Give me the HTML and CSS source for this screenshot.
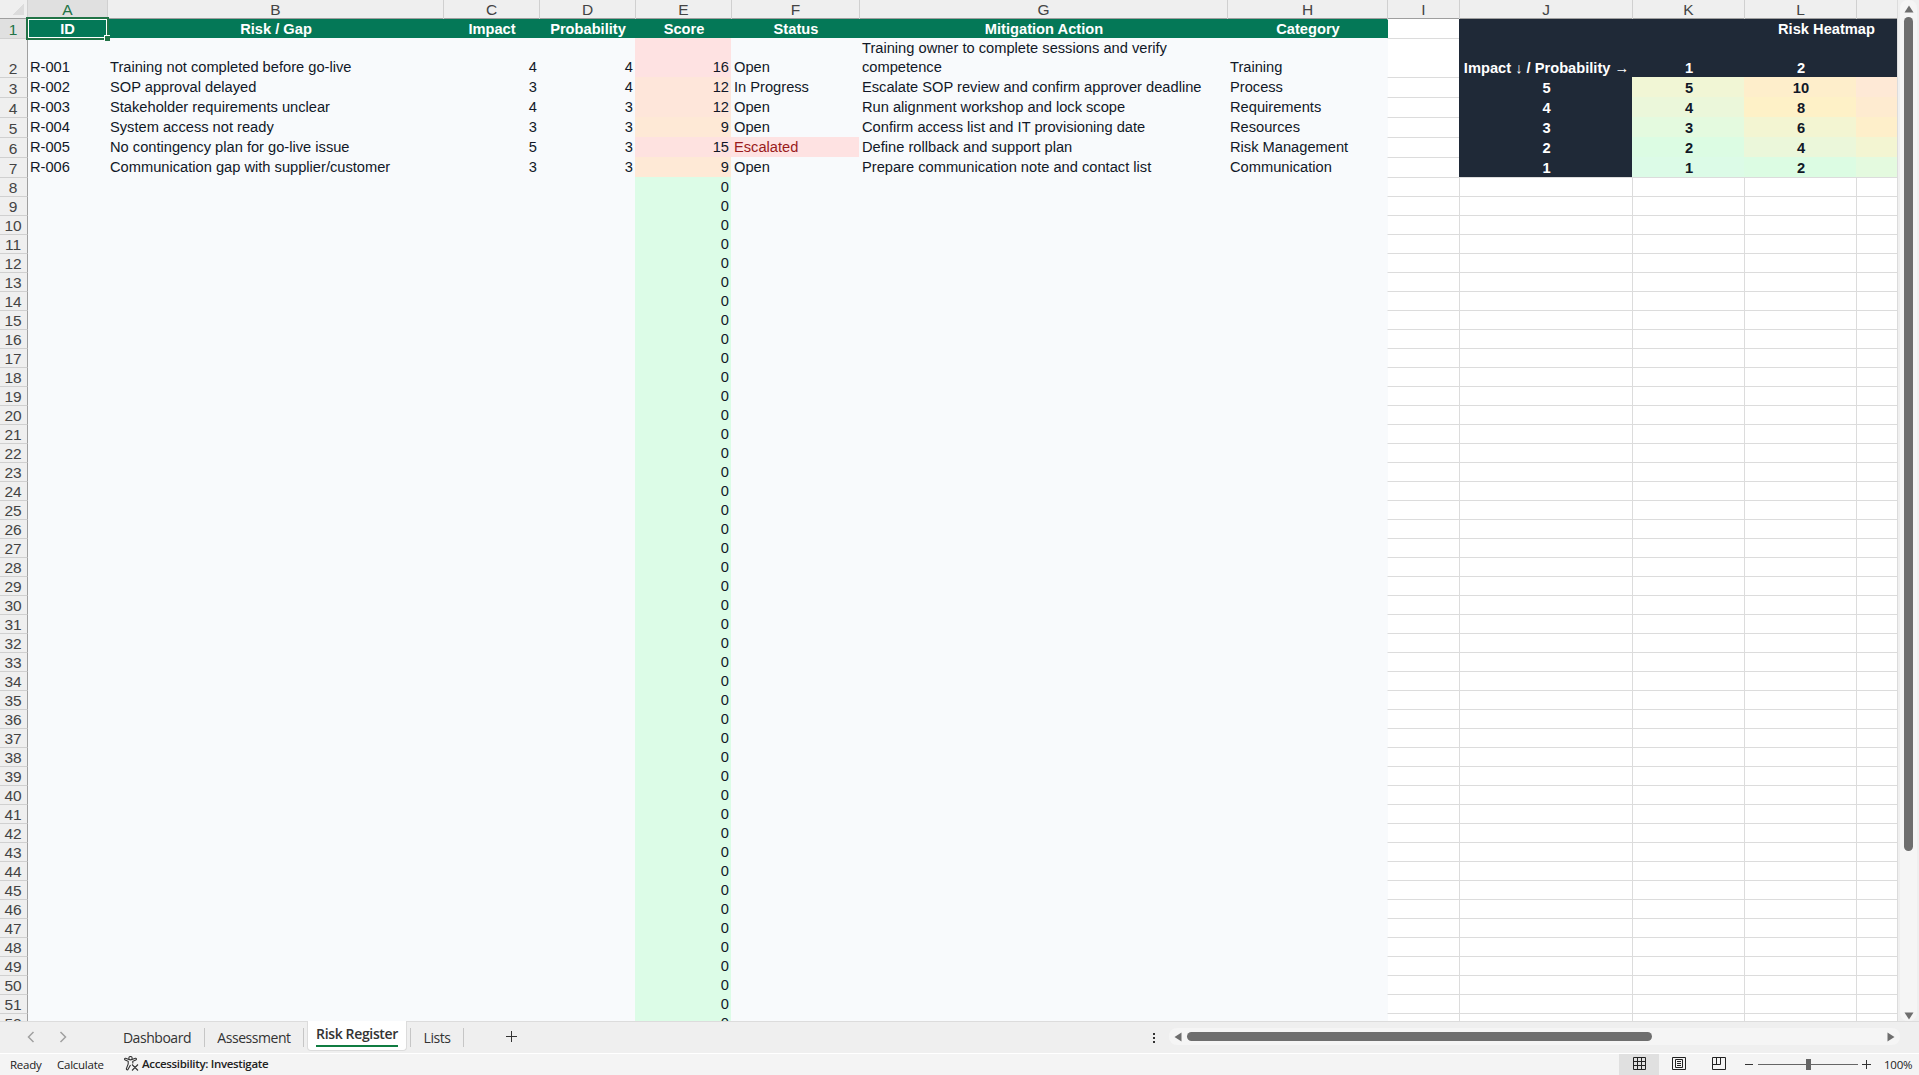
FILE: index.html
```html
<!DOCTYPE html>
<html lang="en">
<head>
    <meta charset="UTF-8">
    <meta name="viewport" content="width=device-width, initial-scale=1.0">
    <title>Risk Register</title>
    <link rel="stylesheet" href="styles.css">
</head>
<body>
    <div class="app">
        <div class="main">
            <div class="sheet" id="sheet"></div>
            <div class="vscroll">
                <svg width="10" height="8" viewBox="0 0 10 8"><path d="M5 .5 9.5 7.5H.5z" fill="#6e6e6e"/></svg>
                <div class="vthumb"></div>
                <svg class="down" width="10" height="8" viewBox="0 0 10 8"><path d="M5 7.5 9.5.5H.5z" fill="#6e6e6e"/></svg>
            </div>
        </div>

        <div class="tabbar">
            <div class="nav">
                <svg width="8" height="12" viewBox="0 0 8 12"><path d="M6.5 1 1.5 6l5 5" fill="none" stroke="#a0a0a0" stroke-width="1.5"/></svg>
                <svg width="8" height="12" viewBox="0 0 8 12"><path d="M1.5 1l5 5-5 5" fill="none" stroke="#a0a0a0" stroke-width="1.5"/></svg>
            </div>
            <div class="tab dashboard"><span>Dashboard</span></div>
            <div class="tab assessment"><span>Assessment</span></div>
            <div class="tab active"><span>Risk Register</span></div>
            <div class="tab lists"><span>Lists</span></div>
            <svg class="plus" width="11" height="11" viewBox="0 0 11 11"><path d="M5.500 0v11M0 5.500h11" stroke="#333"/></svg>
            <svg class="dots" width="2" height="11" viewBox="0 0 2 11"><path d="M0 0h2v2H0zM0 4h2v2H0zM0 8h2v2H0z" fill="#333"/></svg>
            <div class="hscroll">
                <svg width="8" height="10" viewBox="0 0 8 10"><path d="M.5 5 7.5.5v9z" fill="#6e6e6e"/></svg>
                <div class="hthumb"></div>
                <svg class="right" width="8" height="10" viewBox="0 0 8 10"><path d="M7.5 5 .5.5v9z" fill="#6e6e6e"/></svg>
            </div>
        </div>

        <div class="statusbar">
            <span class="ready">Ready</span>
            <span class="calc">Calculate</span>
            <svg class="access" width="15" height="15" viewBox="0 0 15 15" fill="none" stroke="#333" stroke-width="1.1">
                <circle cx="6.5" cy="2.2" r="1.7"/>
                <path d="M5 3.6 1.6 2.3C.5 2 .2 3.600 1.200 4L4.200 5.300V8L2.400 12.600c-.3 1.200 1.200 1.700 1.700.7L6.500 9M8 3.600l3.400-1.300c1.100-.3 1.400 1.300.4 1.700L8.800 5.300V7.500M8 8.500l6 6M14 8.500l-6 6"/>
            </svg>
            <b class="accesstext">Accessibility: Investigate</b>
            <div class="views">
                <div class="view on">
                    <svg width="13" height="13" viewBox="0 0 13 13" fill="none" stroke="#222"><path d="M.5.500h12v12H.5zM.5 4.500h12M.5 8.500h12M4.500.5v12M8.500.5v12"/></svg>
                </div>
                <div class="view">
                    <svg width="14" height="13" viewBox="0 0 14 13" fill="none" stroke="#222"><path d="M.5.500h13v12H.5zM3.500 2.500h7v8h-7zM5 4.500h4M5 6.500h4M5 8.500h4"/></svg>
                </div>
                <div class="view">
                    <svg width="14" height="13" viewBox="0 0 14 13" fill="none" stroke="#222"><path d="M.5.500h13v12H.5zM.5 7.500h8v-7M4.500.5v7"/></svg>
                </div>
            </div>
            <svg class="minus" width="8" height="9" viewBox="0 0 8 9"><path d="M0 4.500h8" stroke="#333"/></svg>
            <div class="slider"><div class="knob"></div></div>
            <svg class="zoomin" width="9" height="9" viewBox="0 0 9 9"><path d="M0 4.500h9M4.500 0v9" stroke="#333"/></svg>
            <span class="percent">100%</span>
        </div>
    </div>

    <script>
        const columns = 'ABCDEFGHIJKLM'.split('');

        const headers = ['ID', 'Risk / Gap', 'Impact', 'Probability', 'Score', 'Status', 'Mitigation Action', 'Category'];

        const risks = [
            ['R-001', 'Training not completed before go-live', 4, 4, 16, 'Open', 'Training owner to complete sessions and verify competence', 'Training'],
            ['R-002', 'SOP approval delayed', 3, 4, 12, 'In Progress', 'Escalate SOP review and confirm approver deadline', 'Process'],
            ['R-003', 'Stakeholder requirements unclear', 4, 3, 12, 'Open', 'Run alignment workshop and lock scope', 'Requirements'],
            ['R-004', 'System access not ready', 3, 3, 9, 'Open', 'Confirm access list and IT provisioning date', 'Resources'],
            ['R-005', 'No contingency plan for go-live issue', 5, 3, 15, 'Escalated', 'Define rollback and support plan', 'Risk Management'],
            ['R-006', 'Communication gap with supplier/customer', 3, 3, 9, 'Open', 'Prepare communication note and contact list', 'Communication']
        ];

        // Heatmap rows, columns J to M
        const heatmap = [
            ['Impact ↓ / Probability →', 1, 2, ''],
            [5, 5, 10, ''],
            [4, 4, 8, ''],
            [3, 3, 6, ''],
            [2, 2, 4, ''],
            [1, 1, 2, '']
        ];

        function cell(text, cls) {
            return `<div class="cell ${cls}">${text === '' ? '' : `<span>${text}</span>`}</div>`;
        }

        let html = '<div class="row colhead"><div class="corner"></div>';
        columns.forEach((c, i) => {
            html += `<div class="col${i === 0 ? ' sel' : ''}">${c === 'M' ? '' : c}</div>`;
        });
        html += '</div>';

        for (let r = 1; r <= 52; r++) {
            const size = r === 1 ? 'first' : r === 2 ? 'tall' : r <= 7 ? 'mid' : 'low';
            html += `<div class="row ${size}"><div class="rownum${r === 1 ? ' sel' : ''}">${r}</div>`;
            for (let c = 0; c < 8; c++) {
                if (r === 1) {
                    html += cell(headers[c], 'head' + (c === 0 ? ' picked' : ''));
                    continue;
                }
                const risk = risks[r - 2];
                let value = risk ? risk[c] : (c === 4 ? 0 : '');
                let cls = 'body';
                if (c === 0) cls += ' id';
                if (c >= 2 && c <= 4) cls += ' num';
                if (c === 4) cls += ' score s' + value;
                if (value === 'Escalated') cls += ' escalated';
                html += cell(value, cls);
            }
            html += cell('', 'plain');
            if (r === 1) {
                html += '<div class="cell dark title"><span>Risk Heatmap</span></div>';
            } else if (r <= 7) {
                heatmap[r - 2].forEach((v, i) => {
                    // column M holds impact x 3, only its colour is in view
                    const score = i === 3 ? (8 - r) * 3 : v;
                    const cls = (r === 2 || i === 0) ? 'dark' : 'h' + score;
                    html += cell(v, 'map ' + cls);
                });
            } else {
                html += cell('', 'plain') + cell('', 'plain') + cell('', 'plain') + cell('', 'plain');
            }
            html += '</div>';
        }
        document.getElementById('sheet').innerHTML = html;
    </script>
</body>
</html>
```
FILE: styles.css
```css
body {
    margin: 0;
    background: #efefef;
    font-family: "Liberation Sans", Arial, sans-serif;
    overflow: hidden;
}
.app {
    display: flex;
    flex-direction: column;
    width: 1919px;
    height: 1075px;
}
.main {
    display: flex;
    height: 1021px;
}
.sheet {
    width: 1897px;
    height: 1021px;
    overflow: hidden;
    border-right: 1px solid #dcdcdc;
}
.row {
    display: grid;
    grid-template-columns: 28px 79px 336px 96px 96px 96px 128px 368px 160px 72px 173px 112px 112px 41px;
    height: 19px;
}
.row.tall {
    height: 39px;
}
.row.mid {
    height: 20px;
}
.colhead {
    height: 18px;
    border-bottom: 1px solid #9f9f9f;
    background: #efefef;
}
.col {
    display: flex;
    justify-content: center;
    font-size: 15.5px;
    line-height: 19px;
    color: #444;
    border-left: 1px solid #d0d0d0;
}
.col.sel {
    background: #e0e0e0;
    color: #217346;
    border-left: none;
}
.corner {
    background: linear-gradient(135deg, transparent 50%, #dcdcdc 50%) no-repeat 13px 4px / 11px 11px;
    border-right: 1px solid #d0d0d0;
}
.rownum {
    display: flex;
    align-items: flex-end;
    justify-content: center;
    padding-right: 1px;
    border-right: 1px solid #9f9f9f;
    border-top: 1px solid #d0d0d0;
    background: #efefef;
    color: #444;
    font-size: 15.5px;
    line-height: 16px;
    overflow: hidden;
}
.rownum.sel {
    background: #e0e0e0;
    color: #217346;
    border-top: none;
}
.cell {
    display: flex;
    align-items: flex-end;
    min-width: 0;
    padding: 0 3px;
    font-size: 14.67px;
    line-height: 19px;
    color: #111827;
}
.low .cell {
    line-height: 17px;
}
.head {
    justify-content: center;
    padding-left: 5px;
    background: #047857;
    color: #fff;
    font-weight: bold;
    line-height: 17px;
}
.picked {
    position: relative;
    padding-left: 3px;
    outline: 2px solid #217346;
    box-shadow: inset 0 0 0 1px #fff;
}
.picked::after {
    content: "";
    position: absolute;
    right: -3px;
    bottom: -3px;
    width: 5px;
    height: 5px;
    background: #217346;
    border: 1px solid #fff;
    border-right: none;
    border-bottom: none;
}
.body {
    background: #f8fafc;
}
.id {
    padding-left: 2px;
}
.num {
    justify-content: flex-end;
    padding-right: 2px;
}
.s0 { background: #dcfce7; }
.s9 { background: #fee9d6; }
.s12 { background: #fee6da; }
.s15 { background: #fee2e0; }
.s16 { background: #fee2e2; }
.escalated {
    background: #fee2e2;
    color: #991b1b;
}
.plain {
    background: #fff;
    border-top: 1px solid #dcdcdc;
    border-left: 1px solid #dcdcdc;
}
.row .body + .plain {
    border-left-color: #f8fafc;
}
.first .plain {
    border-top-color: #fff;
    border-left-color: #047857;
}
.dark {
    background: #1f2937;
    color: #fff;
    font-weight: bold;
    justify-content: center;
    line-height: 17px;
}
.title {
    grid-column: 11 / 15;
    padding-left: 300px;
}
.map {
    justify-content: center;
    padding-left: 5px;
    font-weight: bold;
    line-height: 18px;
    white-space: nowrap;
}
.h1 { background: #dcfbe7; }
.h2 { background: #dcfce3; }
.h3 { background: #e4fadf; }
.h4 { background: #ebf7da; }
.h5 { background: #f1f6d5; }
.h6 { background: #f3f5d2; }
.h8 { background: #fef1c7; }
.h9 { background: #feefca; }
.h10 { background: #feeecb; }
.h12 { background: #feebd0; }
.h15 { background: #fee9d6; }

.vscroll {
    display: flex;
    flex-direction: column;
    align-items: center;
    width: 17px;
    height: 1021px;
    margin-left: 2px;
    padding-top: 5px;
    box-sizing: border-box;
    background: #f5f5f5;
    border-radius: 8px;
}
.vthumb {
    width: 9px;
    height: 834px;
    margin-top: 4px;
    border-radius: 5px;
    background: #6e6e6e;
}
.down {
    margin-top: auto;
    margin-bottom: 1px;
}

.tabbar {
    display: flex;
    height: 31px;
    border-top: 1px solid #dcdcdc;
    border-bottom: 1px solid #fff;
    background: #efefef;
    font-family: "Open Sans", "Noto Sans", sans-serif;
    font-size: 14px;
    letter-spacing: -0.45px;
    color: #333;
}
.nav {
    display: flex;
    gap: 24px;
    width: 110px;
    padding: 9px 0 0 27px;
    box-sizing: border-box;
}
.tab {
    display: flex;
    justify-content: center;
    height: 19px;
    margin-top: 6px;
    line-height: 20px;
    border-right: 1px solid #c6c6c6;
}
.dashboard { width: 94px; }
.assessment { width: 98px; }
.lists { width: 52px; margin-left: 3px; border-left: 1px solid #c6c6c6; }
.tab.active {
    width: 98px;
    height: 29px;
    margin: -1px 0 0 3px;
    background: #fff;
    border: 1px solid #dcdcdc;
    border-top: none;
    border-radius: 0 0 4px 4px;
}
.active span {
    height: 24px;
    line-height: 26px;
    font-weight: 600;
    letter-spacing: -0.35px;
    border-bottom: 2px solid #107c41;
}
.plus {
    margin: 9px 0 0 42px;
}
.dots {
    margin: 11px 0 0 auto;
}
.hscroll {
    display: flex;
    align-items: center;
    width: 731px;
    height: 17px;
    margin: 6px 19px 0 14px;
    padding: 0 5px;
    box-sizing: border-box;
    border-radius: 8px;
    background: #f5f5f5;
}
.hthumb {
    width: 465px;
    height: 9px;
    margin-left: 5px;
    border-radius: 5px;
    background: #6e6e6e;
}
.right {
    margin-left: auto;
}

.statusbar {
    display: flex;
    align-items: center;
    height: 21px;
    background: #f4f4f4;
    font-family: "Open Sans", "Noto Sans", sans-serif;
    font-size: 11.5px;
    letter-spacing: -0.25px;
    color: #222;
}
.ready { width: 47px; margin-left: 10px; }
.calc { width: 67px; }
.access { margin-top: -2px; }
.accesstext {
    margin: -2px 0 0 3px;
    font-weight: 600;
    letter-spacing: -0.33px;
}
.views {
    display: flex;
    margin-left: auto;
}
.view {
    display: flex;
    align-items: center;
    justify-content: center;
    width: 40px;
    height: 21px;
    padding-bottom: 2px;
    box-sizing: border-box;
}
.view.on {
    background: #e0e0e0;
}
.minus { margin-left: 6px; }
.slider {
    display: flex;
    align-items: center;
    width: 100px;
    height: 11px;
    margin-left: 5px;
    background: linear-gradient(#666, #666) no-repeat 0 5px / 100% 1px;
}
.knob {
    width: 5px;
    height: 11px;
    margin-left: 48px;
    background: #666;
}
.zoomin { margin-left: 4px; }
.percent { width: 27px; margin: 0 8px 0 13px; }
```
